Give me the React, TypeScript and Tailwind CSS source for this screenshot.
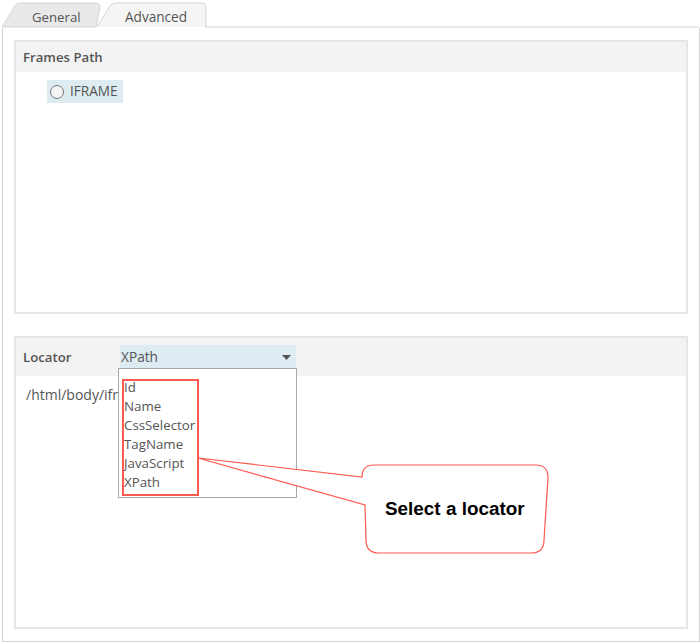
const font = "font-['Open_Sans','Noto_Sans',sans-serif]";

function Tabs() {
  return (
    <div className="relative h-[28px] shrink-0">
      <svg className="absolute left-0 top-0" width="700" height="28" viewBox="0 0 700 28" fill="none">
        <path d="M2 27 L15 6 Q17 3 21 3 H95 Q100 3 100 7 L96 27 Z" fill="#e9e9e9" stroke="#d4d4d4" />
        <path d="M97 27 L110 6 Q112 3 116 3 H201 Q206 3 206 8 V27" fill="#f5f5f5" stroke="#d4d4d4" />
        <path d="M206 27 H699" stroke="#d4d4d4" />
      </svg>
      <span className="absolute left-[32px] top-[8px] text-[13.2px] leading-[18px] text-[#555]">General</span>
      <span className="absolute left-[125px] top-[8px] text-[13.6px] leading-[18px] text-[#555]">Advanced</span>
    </div>
  );
}

function Callout() {
  return (
    <>
      <svg className="absolute left-0 top-0" width="700" height="644" viewBox="0 0 700 644" fill="none">
        <path
          d="M198 458 L362 477 Q362 465 374 465 H536 Q548 465 548 478 L544 540 Q544 553 531 553 H379 Q366 553 366 540 L365 505 Z"
          fill="#ffffff"
          stroke="#ff5a4f"
          strokeWidth="1.2"
        />
      </svg>
      <span className="absolute left-[385px] top-[498px] text-[18.9px] leading-[22px] font-bold text-black font-['Liberation_Sans',sans-serif] whitespace-nowrap">
        Select a locator
      </span>
    </>
  );
}

function Dropdown() {
  return (
    <div className="absolute left-[118px] top-[368px] w-[179px] h-[130px] bg-white border border-[#a8a8a8] pt-[10px] pl-[3px]">
      <div className="w-[77px] h-[117px] border-2 border-[#ff5a4f] box-border">
        <div className="-mt-[3px] flex flex-col text-[13.3px] leading-[19px] text-[#555]">
          {["Id", "Name", "CssSelector", "TagName", "JavaScript", "XPath"].map((t) => (
            <span key={t}>{t}</span>
          ))}
        </div>
      </div>
    </div>
  );
}

export default function App() {
  return (
    <div className={`relative w-[700px] h-[644px] bg-white overflow-hidden flex flex-col ${font}`}>
      <Tabs />
      <div className="ml-[2px] h-[614px] border border-t-0 border-[#d4d4d4] pt-[12px] px-[11px] flex flex-col">
        <section className="h-[274px] border-2 border-[#e6e6e6] flex flex-col">
          <div className="h-[30px] bg-[#f3f3f3] flex items-center pl-[7px] pt-[2px] text-[13.2px] font-semibold text-[#555]">
            Frames Path
          </div>
          <div className="pl-[31px] pt-[8px]">
            <div className="w-[76px] h-[23px] bg-[#dcecf0] flex items-center pl-[3px] gap-[6px]">
              <span className="w-[14px] h-[14px] rounded-full border border-[#777] bg-[#f4f4f4]" />
              <span className="text-[13.6px] text-[#555]">IFRAME</span>
            </div>
          </div>
        </section>
        <section className="mt-[22px] h-[293px] border-2 border-[#e6e6e6] flex flex-col">
          <div className="h-[38px] bg-[#f3f3f3] flex items-center pl-[7px]">
            <span className="w-[97px] pt-[2px] text-[13.2px] font-semibold text-[#555]">Locator</span>
            <div className="w-[176px] h-[24px] bg-[#deebf2] border-b border-[#666] flex items-center justify-between pl-[1px] pr-[5px] pt-[1px] text-[13.7px] text-[#555]">
              XPath
              <svg width="9" height="5" viewBox="0 0 9 5"><path d="M0 0H9L4.5 5Z" fill="#555" /></svg>
            </div>
          </div>
          <div className="pl-[10px] pt-[9px] w-[102px] overflow-hidden whitespace-nowrap text-[14px] leading-[19px] text-[#555]">/html/body/iframe</div>
        </section>
      </div>
      <Dropdown />
      <Callout />
    </div>
  );
}
